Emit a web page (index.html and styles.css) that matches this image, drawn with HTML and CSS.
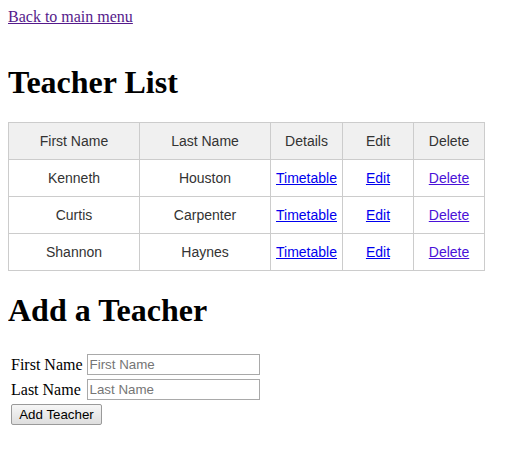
FILE: index.html
```html
<!DOCTYPE html>
<html>
<head>
<meta charset="utf-8">
<title>Teacher List</title>
<link rel="stylesheet" href="styles.css">
</head>
<body>
<a class="back visited" href="#">Back to main menu</a>
<h1 class="title">Teacher List</h1>
<table class="list">
  <thead>
    <tr><th class="c-first">First Name</th><th class="c-last">Last Name</th><th class="c-det">Details</th><th class="c-edit">Edit</th><th class="c-del">Delete</th></tr>
  </thead>
  <tbody>
    <tr><td>Kenneth</td><td>Houston</td><td><a href="#">Timetable</a></td><td><a href="#">Edit</a></td><td><a class="del" href="#">Delete</a></td></tr>
    <tr><td>Curtis</td><td>Carpenter</td><td><a href="#">Timetable</a></td><td><a href="#">Edit</a></td><td><a class="del" href="#">Delete</a></td></tr>
    <tr><td>Shannon</td><td>Haynes</td><td><a href="#">Timetable</a></td><td><a href="#">Edit</a></td><td><a class="del" href="#">Delete</a></td></tr>
  </tbody>
</table>
<h1 class="subtitle">Add a Teacher</h1>
<form class="add-form">
  <table class="form-table">
    <tr><td>First Name</td><td><input class="field" type="text" placeholder="First Name"></td></tr>
    <tr><td>Last Name</td><td><input class="field" type="text" placeholder="Last Name"></td></tr>
    <tr><td colspan="2"><button class="btn" type="button">Add Teacher</button></td></tr>
  </table>
</form>
</body>
</html>
```
FILE: styles.css
```css
html, body {
  background: #fff;
}
body {
  margin: 8px;
  font-family: "Liberation Serif", "Times New Roman", serif;
  font-size: 16px;
  color: #000;
}
a {
  color: #0000ee;
}
a.visited {
  color: #551a8b;
}
a.del {
  color: #4a12d8;
}
.back {
  display: inline-block;
  line-height: 18px;
}
.title {
  font-size: 32px;
  font-weight: bold;
  margin: 38px 0 21px;
  line-height: 37px;
}
.list {
  border-collapse: collapse;
  font-family: "Liberation Sans", Arial, sans-serif;
  font-size: 14px;
  table-layout: fixed;
}
.list th, .list td {
  border: 1px solid #cccccc;
  padding: 10px 0;
  line-height: 16px;
  text-align: center;
  font-weight: normal;
  color: #333;
}
.list th {
  background: #f0f0f0;
}
.c-first { width: 130px; }
.c-last { width: 130px; }
.c-det { width: 71px; }
.c-edit { width: 70px; }
.c-del { width: 70px; }
.subtitle {
  font-size: 32px;
  font-weight: bold;
  margin: 21px 0 20px;
  line-height: 37px;
}
.add-form {
  margin: 0;
  padding-top: 2px;
}
.form-table {
  border-spacing: 2px;
  margin: 0;
}
.form-table td {
  padding: 1px;
}
.field {
  box-sizing: border-box;
  width: 173px;
  height: 21px;
  border: 1px solid #a9a9a9;
  padding: 1px 2px;
  font-family: "Liberation Sans", Arial, sans-serif;
  font-size: 13.33px;
  margin: 0;
}
.field::placeholder {
  color: #757575;
}
.btn {
  box-sizing: border-box;
  height: 21px;
  width: 91px;
  margin: 0;
  padding: 0 6px;
  border: 1px solid #9a9a9a;
  border-radius: 2px;
  background: linear-gradient(#f6f6f6, #dedede);
  font-family: "Liberation Sans", Arial, sans-serif;
  font-size: 13.33px;
  color: #000;
}
```
